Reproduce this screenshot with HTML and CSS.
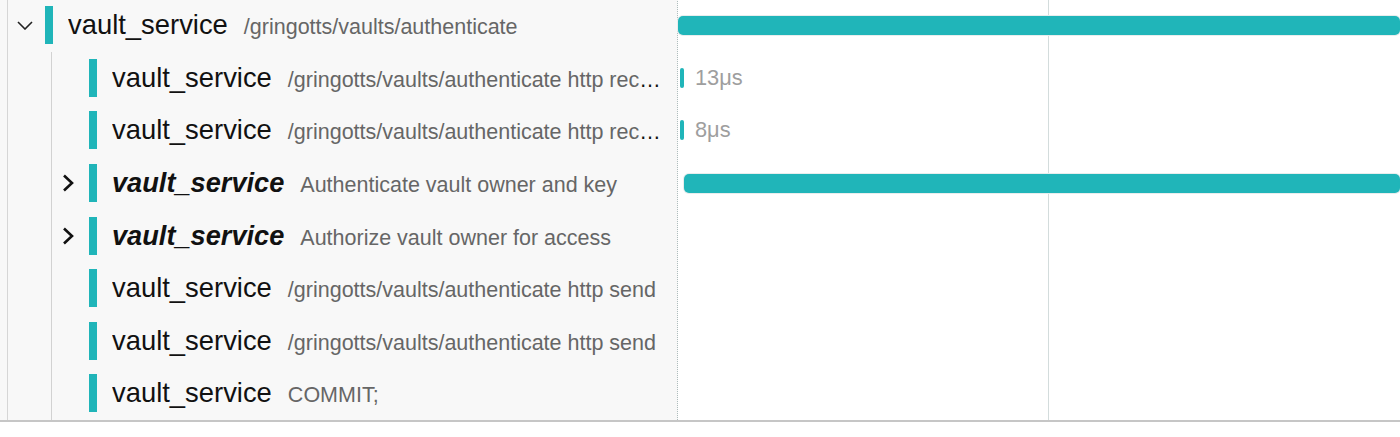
FILE: index.html
```html
<!DOCTYPE html>
<html>
<head>
<meta charset="utf-8">
<link rel="stylesheet" href="styles.css">
</head>
<body>
<div class="view">
  <div class="names">
    <div class="tree">
      <div class="row">
        <span class="toggle"><svg width="16" height="9" viewBox="0 0 16 9"><path d="M1 1 L8 8 L15 1" fill="none" stroke="#222" stroke-width="1.6"/></svg></span>
        <span class="bar"></span>
        <span class="label"><span class="svc">vault_service</span><span class="op">/gringotts/vaults/authenticate</span></span>
      </div>
      <div class="children">
        <div class="row">
          <span class="toggle"></span>
          <span class="bar"></span>
          <span class="label" title="/gringotts/vaults/authenticate http receive"><span class="svc">vault_service</span><span class="op">/gringotts/vaults/authenticate http receive</span></span>
        </div>
        <div class="row">
          <span class="toggle"></span>
          <span class="bar"></span>
          <span class="label" title="/gringotts/vaults/authenticate http receive"><span class="svc">vault_service</span><span class="op">/gringotts/vaults/authenticate http receive</span></span>
        </div>
        <div class="row">
          <span class="toggle"><svg width="13" height="18" viewBox="0 0 13 18"><path d="M2 1.5 L10 9 L2 16.5" fill="none" stroke="#111" stroke-width="2.6"/></svg></span>
          <span class="bar"></span>
          <span class="label"><span class="svc strong">vault_service</span><span class="op">Authenticate vault owner and key</span></span>
        </div>
        <div class="row">
          <span class="toggle"><svg width="13" height="18" viewBox="0 0 13 18"><path d="M2 1.5 L10 9 L2 16.5" fill="none" stroke="#111" stroke-width="2.6"/></svg></span>
          <span class="bar"></span>
          <span class="label"><span class="svc strong">vault_service</span><span class="op">Authorize vault owner for access</span></span>
        </div>
        <div class="row">
          <span class="toggle"></span>
          <span class="bar"></span>
          <span class="label"><span class="svc">vault_service</span><span class="op">/gringotts/vaults/authenticate http send</span></span>
        </div>
        <div class="row">
          <span class="toggle"></span>
          <span class="bar"></span>
          <span class="label"><span class="svc">vault_service</span><span class="op">/gringotts/vaults/authenticate http send</span></span>
        </div>
        <div class="row">
          <span class="toggle"></span>
          <span class="bar"></span>
          <span class="label"><span class="svc">vault_service</span><span class="op">COMMIT;</span></span>
        </div>
      </div>
    </div>
  </div>
  <div class="timeline">
    <div class="trow"><span class="span-bar" style="margin-left:0px;width:722px"></span></div>
    <div class="trow"><span class="span-bar tiny" style="margin-left:2px;width:4px"></span><span class="dur">13μs</span></div>
    <div class="trow"><span class="span-bar tiny" style="margin-left:2px;width:4px"></span><span class="dur">8μs</span></div>
    <div class="trow"><span class="span-bar" style="margin-left:6px;width:716px"></span></div>
    <div class="trow"></div>
    <div class="trow"></div>
    <div class="trow"></div>
    <div class="trow"></div>
  </div>
</div>
</body>
</html>
```

FILE: styles.css
```css
html, body {
  margin: 0;
  padding: 0;
  background: #fff;
}

body {
  font-family: "Liberation Sans", Arial, Helvetica, sans-serif;
  overflow: hidden;
}

.view {
  display: flex;
  width: 1400px;
  margin-top: -1px;
  border-bottom: 2px solid #c6c6c6;
}

.names {
  width: 678px;
  flex: none;
  box-sizing: border-box;
  background: #f8f8f8;
  padding-left: 7px;
  border-right: 1px dotted #aebcbc;
}

.tree {
  border-left: 1px solid #d6d6d6;
}

.children {
  margin-left: 43px;
  border-left: 1px solid #d2d2d2;
}

.row {
  height: 52.6px;
  display: flex;
  align-items: center;
  min-width: 0;
}

.toggle {
  width: 37px;
  flex: none;
  display: flex;
  align-items: center;
  justify-content: center;
  padding-right: 4px;
  box-sizing: border-box;
}

.children .toggle {
  padding-right: 5px;
}

.toggle svg {
  display: block;
}

.bar {
  width: 8px;
  height: 38px;
  flex: none;
  background: #20b5b9;
}

.label {
  margin-left: 15px;
  padding-right: 8px;
  flex: 1;
  min-width: 0;
  white-space: nowrap;
  overflow: hidden;
  text-overflow: ellipsis;
  color: #111;
  font-size: 21.5px;
}

.svc {
  font-size: 27.4px;
  color: #111;
}

.svc.strong {
  font-size: 27.2px;
  font-weight: bold;
  font-style: italic;
}

.op {
  margin-left: 16px;
  color: #666;
  font-size: 21.5px;
}

.timeline {
  flex: 1;
  background: linear-gradient(to right, transparent 370px, #d3dcdc 370px, #d3dcdc 371px, transparent 371px);
}

.trow {
  height: 52.6px;
  display: flex;
  align-items: center;
}

.span-bar {
  height: 19px;
  background: #20b5b9;
  border-radius: 5px;
  box-shadow: 0 0 0 1px #e8eded;
}

.span-bar.tiny {
  height: 20px;
  border-radius: 2px;
  box-shadow: none;
}

.dur {
  margin-left: 11px;
  color: #9e9e9e;
  font-size: 21.8px;
}
```
